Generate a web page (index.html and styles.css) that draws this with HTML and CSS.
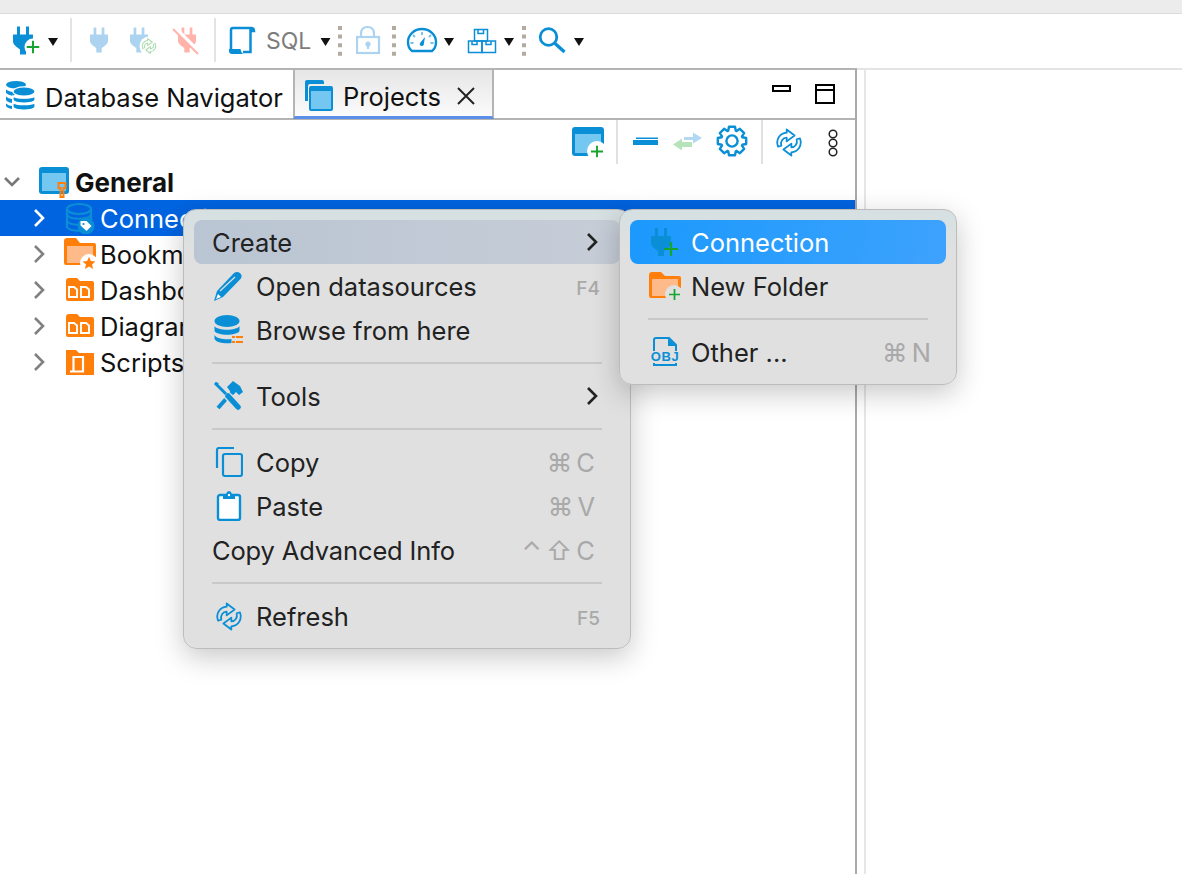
FILE: index.html
```html
<!DOCTYPE html>
<html lang="en">
<head>
<meta charset="utf-8">
<title>Projects</title>
<link rel="stylesheet" href="styles.css">
</head>
<body>
<svg class="defs" width="0" height="0" aria-hidden="true">
  <symbol id="plug" viewBox="0 0 20 28">
    <path fill="currentColor" d="M4 0h3v8h6V0h3v8h4v7q0 3-3 5l-4 3v5H7v-5l-4-3q-3-2-3-5V8h4z"/>
  </symbol>
  <symbol id="sync" viewBox="0 0 30 30">
    <g fill="none" stroke="currentColor" stroke-width="1.900" stroke-linejoin="round">
      <path d="M12.500 4.500V1l8.500 6.500-8.500 6.300V9.800C8.500 9.800 5.500 13.500 6.800 18.500L3.300 19.500C.5 12 5 5 12.500 4.500z"/>
      <path d="M12.500 4.500V1l8.500 6.500-8.500 6.300V9.800C8.500 9.800 5.500 13.500 6.800 18.500L3.300 19.500C.5 12 5 5 12.500 4.500z" transform="rotate(180 15 15)"/>
    </g>
  </symbol>
  <symbol id="chev-r" viewBox="0 0 12 20">
    <path d="M2 2l8 8-8 8" fill="none" stroke="currentColor" stroke-width="2.600"/>
  </symbol>
  <symbol id="plus" viewBox="0 0 14 14">
    <path d="M7 0v14M0 7h14" stroke="#16a52e" stroke-width="2.200"/>
  </symbol>
  <symbol id="caret" viewBox="0 0 10 8">
    <path d="M0 0h10L5 8z" fill="#111"/>
  </symbol>
  <symbol id="grip" viewBox="0 0 4 30">
    <path d="M0 0h4v4H0zM0 8.600h4v4H0zM0 17.200h4v4H0zM0 25.800h4v4H0z" fill="#b3ac9e"/>
  </symbol>
  <symbol id="dfolder" viewBox="0 0 32 32">
    <path d="M2 7q0-3 3-3h8l3 3h12q2 0 2 2v16q0 2-2 2H4q-2 0-2-2z" fill="#ff7f0a"/>
    <path d="M5 13h5l3 2.500V23H5zM17 13h5l3 2.500V23h-8z" fill="none" stroke="#fff" stroke-width="1.900"/>
  </symbol>
</svg>

<div class="title-strip"></div>

<div class="toolbar">
  <svg class="cell" width="35" height="54" viewBox="13 14 35 54"><use href="#plug" x="13" y="26" width="20" height="29" class="blue"/><circle cx="33" cy="47" r="8.500" fill="#fff"/><use href="#plus" x="26.500" y="40.500" width="13" height="13"/></svg>
  <svg class="cell" width="22" height="54" viewBox="48 14 22 54"><use href="#caret" x="48" y="38" width="10" height="8"/></svg>
  <span class="tsep"></span>
  <svg class="cell" width="49" height="54" viewBox="72 14 49 54"><use href="#plug" x="90" y="27" width="18" height="26" class="blue-pale"/></svg>
  <svg class="cell" width="50" height="54" viewBox="121 14 50 54"><use href="#plug" x="130" y="27" width="18" height="26" class="blue-pale"/><circle cx="149" cy="46" r="9.500" fill="#fff"/><use href="#sync" x="141" y="38" width="16" height="16" class="green-pale"/></svg>
  <svg class="cell" width="43" height="54" viewBox="171 14 43 54"><use href="#plug" x="178" y="27" width="18" height="26" class="red-pale"/><path d="M174 27l25 25" stroke="#fff" stroke-width="4"/><path d="M173 29l25 25" stroke="#ffb3ab" stroke-width="2"/></svg>
  <span class="tsep"></span>
  <svg class="cell" width="50" height="54" viewBox="216 14 50 54"><path d="M231 49V30q0-2 2-2h18q3 0 3 3h-3.500M250.500 29v23H243" fill="none" stroke="#0a8fd6" stroke-width="2.500"/><path d="M229 49h11.500q1 5 3.500 5H232q-3 0-3-3z" fill="#0a8fd6"/></svg>
  <span class="sql">SQL</span>
  <svg class="cell" width="18" height="54" viewBox="320 14 18 54"><use href="#caret" x="320.500" y="38" width="10" height="8"/></svg>
  <svg class="cell" width="18" height="54" viewBox="338 14 18 54"><use href="#grip" x="338" y="26" width="4" height="30"/></svg>
  <svg class="cell" width="36" height="54" viewBox="356 14 36 54"><path d="M361 37v-3q0-7 6.500-7t6.500 7v3" fill="none" stroke="#acd4f0" stroke-width="2.200"/><rect x="357" y="37" width="22" height="16" fill="none" stroke="#acd4f0" stroke-width="2.200"/><path d="M368 44v5" stroke="#acd4f0" stroke-width="2.200"/><circle cx="368" cy="44" r="2.600" fill="#acd4f0"/></svg>
  <svg class="cell" width="13" height="54" viewBox="392 14 13 54"><use href="#grip" x="392" y="26" width="4" height="30"/></svg>
  <svg class="cell" width="38" height="54" viewBox="405 14 38 54"><path d="M412 51h20q4-3 4-9a14 13 0 0 0-28 0q0 6 4 9z" fill="none" stroke="#0a8fd6" stroke-width="2.400"/><path d="M422 32v3M413 35l2 2M431 35l-2 2M410.500 43h3M433.500 43h-3" stroke="#6fc0ea" stroke-width="1.800"/><path d="M425 37l-5 6q-1 3 2 3 2 0 2-3z" fill="#0a8fd6"/></svg>
  <svg class="cell" width="23" height="54" viewBox="443 14 23 54"><use href="#caret" x="444" y="38" width="10" height="8"/></svg>
  <svg class="cell" width="37" height="54" viewBox="466 14 37 54"><g fill="none" stroke="#0a8fd6" stroke-width="1.500"><rect x="474.500" y="29.500" width="13" height="11.500"/><rect x="468.500" y="41" width="13.500" height="11.500"/><rect x="482" y="41" width="13.500" height="11.500"/><path d="M478 29.500v4h5.500v-4M472 41v3.500h5V41M486 41v3.500h5V41"/></g></svg>
  <svg class="cell" width="19" height="54" viewBox="503 14 19 54"><use href="#caret" x="504" y="38" width="10" height="8"/></svg>
  <svg class="cell" width="15" height="54" viewBox="522 14 15 54"><use href="#grip" x="522" y="26" width="4" height="30"/></svg>
  <svg class="cell" width="36" height="54" viewBox="537 14 36 54"><circle cx="548.500" cy="37" r="8.300" fill="none" stroke="#0a8fd6" stroke-width="2.800"/><path d="M554.500 43l10 9" stroke="#0a8fd6" stroke-width="3.400"/></svg>
  <svg class="cell" width="12" height="54" viewBox="573 14 12 54"><use href="#caret" x="574" y="38" width="10" height="8"/></svg>
</div>

<div class="work">
  <section class="panel">
    <header class="tabbar">
      <div class="tab">
        <svg width="30" height="30" viewBox="0 0 30 30" class="tab-icon">
          <g fill="#0a8fd6"><ellipse cx="11" cy="3.800" rx="10" ry="3.800"/><path d="M1 8.500c2 2 8 3 12 2.500L8 15q-5-1-7-3zM1 15.500q2 2 6 2.500v4q-5-1-6-3zM1 22.500q2 2 6 2.500v3q-5-1-6-3z"/></g>
          <g fill="#0a8fd6" stroke="#fff" stroke-width="1.200"><ellipse cx="19" cy="10.500" rx="11" ry="4.600"/><path d="M8 15c3 3 19 3 22 0v4c-2 4-20 4-22 0zM8 21.500c3 3 19 3 22 0V26c-2 4-20 4-22 0z"/></g>
        </svg>
        <span>Database Navigator</span>
      </div>
      <div class="tab tab-active">
        <svg width="30" height="32" viewBox="0 0 30 32" class="tab-icon"><path d="M1 22V3q0-2 2-2h15q2 0 2 2v2H6q-2 0-2 2v15z" fill="#0a8fd6"/><rect x="5" y="7" width="24" height="25" rx="2" fill="#0a8fd6"/><rect x="7" y="12" width="20" height="18" fill="#74c7f0"/></svg>
        <span>Projects</span>
        <svg width="20" height="20" viewBox="0 0 20 20" class="tab-close"><path d="M2 2l16 16M18 2L2 18" stroke="#222" stroke-width="2"/></svg>
      </div>
      <div class="tab-tools">
        <svg width="19" height="7" viewBox="0 0 19 7"><rect x="1" y="1" width="17" height="5" fill="none" stroke="#000" stroke-width="2"/></svg>
        <svg class="tool-max" width="20" height="20" viewBox="0 0 20 20"><path d="M1 1h18v18H1zM1 6h18" fill="none" stroke="#000" stroke-width="2"/></svg>
      </div>
    </header>
    <div class="viewbar">
      <svg width="46" height="44" viewBox="570 120 46 44"><rect x="572" y="127" width="32" height="29" rx="3" fill="#0a8fd6"/><rect x="575" y="134" width="26" height="19" fill="#74c7f0"/><circle cx="597" cy="151" r="10" fill="#fff"/><use href="#plus" x="591" y="145.500" width="12" height="12"/></svg>
      <span class="vsep"></span>
      <svg width="54" height="44" viewBox="618 120 54 44"><path d="M633 140h25v5h-25z" fill="#0a8fd6"/><path d="M636 137.500h22v1.500h-22z" fill="#0a8fd6"/></svg>
      <svg width="31" height="44" viewBox="672 120 31 44"><path d="M684 137h9v-4.500l9 5.500-9 5.500V140h-9z" fill="#b3d9f2"/><path d="M692 142h-10v-3.500l-9 6 9 6V147h10z" fill="#b7e3bb"/></svg>
      <svg width="58" height="44" viewBox="-29 -21 58 44"><polygon points="3.760,10.340 3.010,14.180 -3.010,14.180 -3.760,10.340 -4.650,9.970 -7.900,12.160 -12.160,7.900 -9.970,4.650 -10.340,3.760 -14.180,3.010 -14.180,-3.010 -10.340,-3.760 -9.970,-4.650 -12.160,-7.900 -7.900,-12.160 -4.650,-9.970 -3.760,-10.340 -3.010,-14.180 3.010,-14.180 3.760,-10.340 4.650,-9.970 7.900,-12.160 12.160,-7.900 9.970,-4.650 10.340,-3.760 14.180,-3.010 14.180,3.010 10.340,3.760 9.970,4.650 12.160,7.900 7.900,12.160 4.650,9.970" fill="none" stroke="#0a8fd6" stroke-width="2.400" stroke-linejoin="round"/><circle r="5.600" fill="none" stroke="#0a8fd6" stroke-width="2.400"/></svg>
      <span class="vsep"></span>
      <svg class="blue" width="62" height="44" viewBox="0 0 62 44"><use href="#sync" x="12" y="8" width="28" height="29"/></svg>
      <svg width="16" height="44" viewBox="0 0 16 44"><g fill="none" stroke="#222" stroke-width="1.500"><circle cx="8" cy="14" r="3.800"/><circle cx="8" cy="23" r="3.800"/><circle cx="8" cy="32" r="3.800"/></g></svg>
    </div>
    <div class="tree">
      <div class="row row-root">
        <svg class="chev-root" width="18" height="12" viewBox="0 0 18 12"><path d="M2 2l7 7 7-7" fill="none" stroke="#777" stroke-width="2.600"/></svg>
        <svg class="ricon-root" width="30" height="32" viewBox="0 0 30 32"><rect y="1" width="30" height="27" rx="3" fill="#0a8fd6"/><rect x="3" y="7" width="24" height="18" fill="#74c7f0"/><path d="M19.500 17h7v5h-2v9h-3v-9h-2z" fill="none" stroke="#ff7f0a" stroke-width="2"/></svg>
        <span class="label-bold">General</span>
      </div>
      <div class="row row-child row-selected">
        <svg class="chev" width="12" height="20"><use href="#chev-r" width="12" height="20"/></svg>
        <svg class="ricon" width="32" height="32" viewBox="-1 0 32 32"><g fill="none" stroke="#0a8fd6" stroke-width="2.200"><ellipse cx="14" cy="7" rx="12" ry="5"/><path d="M2 7v18c3 5 21 5 24 0V7M2 13c3 5 21 5 24 0M2 19c3 5 21 5 24 0"/></g><circle cx="21" cy="24" r="8.500" fill="#0a8fd6"/><path d="M15.500 19h6l5 5-5 5-6-5.500z" fill="#fff"/><circle cx="18.500" cy="22" r="1.100" fill="#0a8fd6"/></svg>
        <span>Connections</span>
      </div>
      <div class="row row-child">
        <svg class="chev grey" width="12" height="20"><use href="#chev-r" width="12" height="20"/></svg>
        <svg class="ricon" width="32" height="32" viewBox="0 0 32 32"><path d="M0 3q0-3 3-3h9l4 5h14q2 0 2 2v18q0 2-2 2H2q-2 0-2-2z" fill="#ff7f0a"/><rect x="3" y="8" width="26" height="17" fill="#ffba8a"/><circle cx="25" cy="25" r="9" fill="#fff"/><path d="M25 17.500l2.300 5.200 5.600.5-4.200 3.700 1.300 5.500-5-3-5 3 1.300-5.500-4.200-3.700 5.600-.5z" fill="#ff7f0a" transform="translate(4.500 4.500) scale(.82)"/></svg>
        <span>Bookmarks</span>
      </div>
      <div class="row row-child">
        <svg class="chev grey" width="12" height="20"><use href="#chev-r" width="12" height="20"/></svg>
        <svg class="ricon" width="32" height="32"><use href="#dfolder" width="32" height="32"/></svg>
        <span>Dashboards</span>
      </div>
      <div class="row row-child">
        <svg class="chev grey" width="12" height="20"><use href="#chev-r" width="12" height="20"/></svg>
        <svg class="ricon" width="32" height="32"><use href="#dfolder" width="32" height="32"/></svg>
        <span>Diagrams</span>
      </div>
      <div class="row row-child">
        <svg class="chev grey" width="12" height="20"><use href="#chev-r" width="12" height="20"/></svg>
        <svg class="ricon" width="32" height="32" viewBox="0 0 32 32"><path d="M2 4h10l3 3h15v22H2z" fill="#ff7f0a"/><path d="M9.500 11h9.500v14.500H9.500zM6 25.500h8" fill="none" stroke="#fff" stroke-width="2.200"/></svg>
        <span>Scripts</span>
      </div>
    </div>
  </section>
  <div class="gutter"></div>
  <div class="rest"></div>
</div>

<nav class="menu menu-main">
  <div class="item item-hover"><span class="item-text">Create</span><svg class="arrow" width="12" height="20"><use href="#chev-r" width="12" height="20"/></svg></div>
  <div class="item">
    <svg class="micon" width="30" height="32" viewBox="0 0 30 32"><path d="M1 31l3-10L21 3q3-2 6 0 3 3 .5 6L10 27z" fill="#0a8fd6"/><path d="M3 29l2-5 3 3z" fill="#fff"/><path d="M7 21L22 7" stroke="#e0e0e0" stroke-width="1.200"/></svg>
    <span class="item-text">Open datasources</span><span class="key key-f">F4</span>
  </div>
  <div class="item">
    <svg class="micon" width="30" height="30" viewBox="0 0 30 30"><ellipse cx="14" cy="6" rx="12.500" ry="6" fill="#0a8fd6"/><path d="M1.500 11c3 5 22 5 25 0v5c-3 5-22 5-25 0zM1.500 20c2 4 12 5 17 4v4c-6 1-15 0-17-4z" fill="#0a8fd6"/><path d="M19 21h3v2h-3zM23 21h7v2h-7zM19 26h3v2h-3zM23 26h7v2h-7z" fill="#ff7f0a"/></svg>
    <span class="item-text">Browse from here</span>
  </div>
  <hr class="msep">
  <div class="item">
    <svg class="micon" width="30" height="30" viewBox="0 0 30 30"><path d="M5 27L21 9" stroke="#0a8fd6" stroke-width="4"/><path d="M14 6l6-6 7 5 3 6-4 3-3-3-3 3z" fill="#0a8fd6"/><path d="M2 2l13 13" stroke="#0a8fd6" stroke-width="3"/><path d="M13 13l12 13" stroke="#e0e0e0" stroke-width="8"/><path d="M15 15l10 11" stroke="#0a8fd6" stroke-width="5.500" stroke-linecap="round"/><path d="M2 1l4 1-3 3z" fill="#0a8fd6"/></svg>
    <span class="item-text">Tools</span><svg class="arrow" width="12" height="20"><use href="#chev-r" width="12" height="20"/></svg>
  </div>
  <hr class="msep">
  <div class="item">
    <svg class="micon" width="30" height="30" viewBox="-3 0 30 30"><path d="M1 21V3q0-2 2-2h15" fill="none" stroke="#0a8fd6" stroke-width="2.200"/><rect x="7" y="7" width="19" height="22" rx="2" fill="none" stroke="#0a8fd6" stroke-width="2.200"/></svg>
    <span class="item-text">Copy</span><span class="key">⌘ C</span>
  </div>
  <div class="item">
    <svg class="micon" width="30" height="30" viewBox="-3 0 30 30"><rect x="2" y="4" width="22" height="25" rx="2" fill="#fff" stroke="#0a8fd6" stroke-width="2.400"/><path d="M7 3h3q1-3 3-3t3 3h3v5H7z" fill="#0a8fd6"/><circle cx="13" cy="4" r="1.200" fill="#fff"/></svg>
    <span class="item-text">Paste</span><span class="key">⌘ V</span>
  </div>
  <div class="item item-plain">
    <span class="item-text">Copy Advanced Info</span><span class="key">⌃ ⇧ C</span>
  </div>
  <hr class="msep">
  <div class="item">
    <svg class="micon blue" width="30" height="29" viewBox="-2 0 30 29"><use href="#sync" width="28" height="29"/></svg>
    <span class="item-text">Refresh</span><span class="key key-f">F5</span>
  </div>
</nav>

<nav class="menu menu-sub">
  <div class="item item-active">
    <svg class="sicon blue" width="32" height="30" viewBox="-2 0 32 30"><use href="#plug" width="20" height="30"/><use href="#plus" x="13" y="15" width="14" height="14"/></svg>
    <span class="item-text">Connection</span>
  </div>
  <div class="item">
    <svg class="sicon" width="32" height="28" viewBox="0 0 32 28"><path d="M0 3q0-3 3-3h9l4 4h14q2 0 2 2v18q0 2-2 2H2q-2 0-2-2z" fill="#ff7f0a"/><rect x="3" y="7" width="26" height="17" fill="#ffba8a"/><circle cx="25" cy="22" r="9" fill="#e0e0e0"/><use href="#plus" x="20" y="17" width="11" height="11"/></svg>
    <span class="item-text">New Folder</span>
  </div>
  <hr class="msep">
  <div class="item">
    <svg class="sicon" width="32" height="30" viewBox="-1 0 32 30"><path d="M4 14V3q0-2 2-2h13l7 7v6M4 26v2h22v-2" fill="none" stroke="#0a8fd6" stroke-width="2"/><path d="M18 1v8h8z" fill="#0a8fd6"/><text x="15" y="24" class="obj">OBJ</text></svg>
    <span class="item-text">Other ...</span><span class="key">⌘ N</span>
  </div>
</nav>
</body>
</html>
```
FILE: styles.css
```css
* { box-sizing: border-box; }
html, body { margin: 0; height: 874px; overflow: hidden; }
body {
  position: relative;
  display: flex;
  flex-direction: column;
  background: #fff;
  font-family: Inter, "Noto Sans", "DejaVu Sans", sans-serif;
  font-size: 25.500px;
  color: #111;
}
svg { display: block; flex: none; }
.defs { position: absolute; }
.blue { color: #0a8fd6; }
.blue-pale { color: #acd4f0; }
.green-pale { color: #a9dcae; }
.red-pale { color: #ffb3ab; }
.grey { color: #808080; }

.title-strip { height: 14px; background: #ececec; border-bottom: 1px solid #dcdcdc; flex: none; }

.toolbar { height: 54px; flex: none; display: flex; align-items: flex-start; padding-left: 13px; }
.tsep { width: 2px; height: 44px; margin-top: 4px; background: #e3e3e3; flex: none; }
.sql { width: 54px; height: 54px; line-height: 54px; font-size: 23px; color: #7d7d7d; flex: none; }

.work { flex: 1; display: flex; min-height: 0; }
.panel { width: 857px; flex: none; border-top: 2px solid #b4b4b4; border-right: 2px solid #a9a9a9; display: flex; flex-direction: column; }
.gutter { width: 7px; flex: none; border-top: 2px solid #e4e4e4; }
.rest { flex: 1; border-left: 2px solid #e6e6e6; border-top: 2px solid #e4e4e4; }

.tabbar { height: 50px; flex: none; display: flex; align-items: flex-start; border-bottom: 2px solid #b4b4b4; }
.tab { width: 293px; height: 48px; flex: none; display: flex; align-items: center; padding: 6px 0 0 5px; gap: 10px; }
.tab-icon { margin-top: -3px; }
.tab-active {
  width: 201px; height: 49px; padding-left: 9px; gap: 9px;
  border-left: 2px solid #b4b4b4; border-right: 2px solid #b4b4b4; border-bottom: 3px solid #5b8fe8;
  background: linear-gradient(#e6e6e6, #fbfbfb);
}
.tab-close { margin-left: 6px; }
.tab-tools { flex: 1; display: flex; align-items: flex-start; justify-content: flex-end; gap: 24px; padding: 15px 20px 0 0; }
.tool-max { margin-top: -1px; }

.viewbar { height: 44px; flex: none; display: flex; justify-content: flex-end; align-items: center; padding-right: 14px; }
.vsep { width: 2px; height: 44px; background: #e1e1e1; flex: none; }

.tree { flex: 1; }
.row { height: 36px; display: flex; align-items: center; }
.row-root { padding-left: 3px; }
.chev-root { margin-right: 18px; }
.ricon-root { margin-right: 6px; }
.label-bold { font-weight: 700; font-size: 26px; }
.row-child { padding-left: 33px; }
.chev { margin-right: 19px; }
.ricon { margin-right: 4px; }
.row-selected { background: #0064e1; color: #fff; }

.menu {
  position: absolute;
  border: 1px solid #bcbcbc;
  border-radius: 13px;
  padding: 10px;
  background: linear-gradient(#d5e0e2, #e0e0e0 40px);
  box-shadow: 0 8px 28px rgba(0, 0, 0, .22);
  color: #222;
}
.menu-main { left: 183px; top: 209px; width: 448px; height: 440px; }
.menu-sub { left: 619px; top: 209px; width: 338px; height: 176px; }
.item { height: 44px; display: flex; align-items: center; padding: 0 20px; border-radius: 8px; }
.item-text { flex: 1; }
.item-hover { background: linear-gradient(90deg, #bac5d3, #c6cdd7); padding-left: 18px; }
.item-plain { padding-left: 18px; }
.item-plain .item-text { letter-spacing: -.15px; }
.item-active { background: linear-gradient(100deg, #1b99fd, #3da2fd); color: #fff; }
.micon { margin-right: 13px; margin-left: -1px; }
.sicon { margin-right: 10px; margin-left: -1px; }
.arrow { color: #222; margin-right: 2px; }
.key { color: #a9a9a9; font-size: 25.500px; word-spacing: -3px; margin-right: 5px; }
.menu-sub .key { margin-right: -5px; }
.key-f { font-size: 19px; font-weight: 500; margin: 5px 0 0; word-spacing: 0; }
.msep { height: 2px; margin: 10px 18px; border: 0; background: #c9c9c9; }
.obj { font: 700 13px "Liberation Sans", sans-serif; letter-spacing: .6px; text-anchor: middle; fill: #0a8fd6; }
```
